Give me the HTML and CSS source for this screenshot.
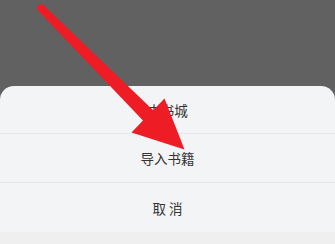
FILE: index.html
```html
<!DOCTYPE html>
<html lang="zh-CN">
<head>
    <meta charset="UTF-8">
    <meta name="viewport" content="width=device-width, initial-scale=1.0">
    <title>导入书籍</title>
    <link rel="stylesheet" href="styles.css">
</head>
<body>
    <div class="screen">
        <!-- Dimmed backdrop -->
        <div class="backdrop"></div>

        <!-- Action sheet -->
        <div class="sheet">
            <div class="sheet-item">去书城</div>
            <div class="sheet-item">导入书籍</div>
            <div class="sheet-item">取 消</div>
            <div class="sheet-footer"></div>
        </div>

        <!-- Red pointer arrow -->
        <svg class="pointer" width="335" height="244" viewBox="0 0 335 244">
            <circle cx="41" cy="8" r="3.8" fill="#ee1c25"/>
            <polygon fill="#ee1c25" points="43.7,5.3 153.2,110.2 164.5,98.5 184.5,149.5 131.5,132.5 143,120.6 38.3,10.7"/>
        </svg>
    </div>
</body>
</html>
```

FILE: styles.css
```css
* {
    margin: 0;
    padding: 0;
    box-sizing: border-box;
}

body {
    background: #616161;
    font-family: "Noto Sans CJK SC", "Noto Sans", sans-serif;
    overflow: hidden;
}

.screen {
    position: relative;
    width: 335px;
    height: 244px;
    display: flex;
    flex-direction: column;
}

.backdrop {
    flex: 1;
    background: #616161;
}

/* Action sheet */
.sheet {
    background: #f3f4f6;
    border-radius: 14px 14px 0 0;
    display: flex;
    flex-direction: column;
}

.sheet-item {
    height: 49px;
    display: flex;
    align-items: center;
    justify-content: center;
    font-size: 13.5px;
    color: #333;
    border-bottom: 1px solid #e6e7e9;
}

.sheet-item:first-child {
    height: 48px;
}

.sheet-item:nth-child(3) {
    border-bottom: none;
}

.sheet-footer {
    height: 12px;
    background: #efefef;
}

.pointer {
    position: absolute;
    left: 0;
    top: 0;
    pointer-events: none;
}
```
